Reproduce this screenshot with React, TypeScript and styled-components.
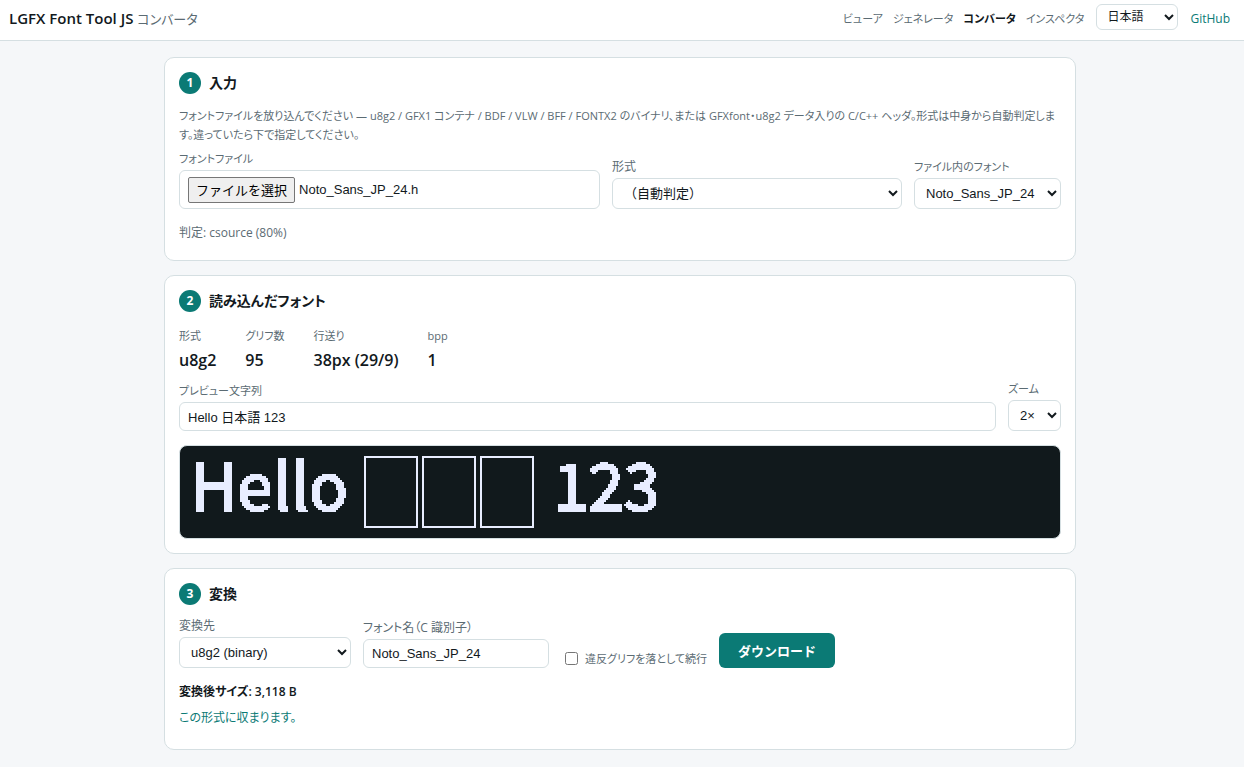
import React, { useRef } from "react";
import styled, { createGlobalStyle } from "styled-components";

const ink = "#12191d";
const muted = "#5b6b73";
const accent = "#0b7a75";
const line = "#d5dfe2";
const uiFont = '"Open Sans", "Noto Sans CJK JP", sans-serif';
const controlFont = '"Liberation Sans", "Noto Sans CJK JP", sans-serif';

const GlobalStyle = createGlobalStyle`
  *, *::before, *::after { box-sizing: border-box; }
  body {
    margin: 0;
    background: #f5f7f9;
    color: ${ink};
    font-family: ${uiFont};
    font-size: 12px;
    line-height: 19px;
    font-feature-settings: "palt";
  }
`;

const Header = styled.header`
  display: flex;
  align-items: center;
  justify-content: space-between;
  gap: 12px;
  min-height: 41px;
  padding: 4px 14px 10px 9px;
  background: #fff;
  border-bottom: 1px solid ${line};
`;

const Title = styled.h1`
  margin: 0;
  padding-top: 2px;
  font-size: 15px;
  line-height: 20px;
  font-weight: 600;
`;

const Subtitle = styled.span`
  color: ${muted};
  font-size: 13px;
  font-weight: 400;
`;

const Nav = styled.nav`
  display: flex;
  align-items: center;
  gap: 10px;
`;

const NavLink = styled.a<{ $current?: boolean; $accent?: boolean }>`
  padding-top: 2px;
  color: ${(p) => (p.$accent ? accent : p.$current ? ink : muted)};
  font-size: ${(p) => (p.$accent ? 12 : 11)}px;
  font-weight: ${(p) => (p.$current ? 700 : 400)};
  text-decoration: none;
`;

const Main = styled.main`
  display: flex;
  flex-direction: column;
  gap: 14px;
  max-width: 944px;
  margin: 0 auto;
  padding: 16px 18px 16px 14px;
`;

const Card = styled.section`
  padding: 14px;
  background: #fff;
  border: 1px solid ${line};
  border-radius: 10px;
`;

const CardTitle = styled.h2<{ $gap: number }>`
  display: flex;
  align-items: center;
  gap: 8px;
  margin: 0 0 ${(p) => p.$gap}px;
  font-size: 14px;
  line-height: 22px;
  font-weight: 600;
`;

const Step = styled.span`
  display: grid;
  place-items: center;
  width: 22px;
  height: 22px;
  border-radius: 50%;
  background: ${accent};
  color: #fff;
  font-size: 12px;
  font-weight: 700;
`;

const Hint = styled.p`
  margin: 0 0 5px;
  color: ${muted};
  font-size: 11px;
`;

const Row = styled.div<{ $columns: string }>`
  display: grid;
  grid-template-columns: ${(p) => p.$columns};
  align-items: end;
  gap: 12px;
`;

const Field = styled.div`
  display: flex;
  flex-direction: column;
  gap: 2px;
  min-width: 0;
`;

const Label = styled.label<{ $dense?: boolean }>`
  color: ${muted};
  font-size: ${(p) => (p.$dense ? 11 : 12)}px;
  white-space: nowrap;
`;

const Select = styled.select<{ $compact?: boolean }>`
  width: 100%;
  height: ${(p) => (p.$compact ? 26 : 31)}px;
  padding: 0 ${(p) => (p.$compact ? 6 : 7)}px;
  background: #fff;
  border: 1px solid ${line};
  border-radius: 6px;
  color: ${ink};
  font-family: ${controlFont};
  font-size: ${(p) => (p.$compact ? 12 : 13)}px;
`;

const LanguageSelect = styled(Select)`
  width: 82px;
  margin: 0 2px;
`;

const TextInput = styled.input`
  width: 100%;
  height: 29px;
  padding: 0 8px;
  background: #fff;
  border: 1px solid ${line};
  border-radius: 6px;
  color: ${ink};
  font-family: ${controlFont};
  font-size: 13px;
`;

const FileBox = styled.div`
  display: flex;
  align-items: center;
  gap: 4px;
  height: 39px;
  padding: 0 8px;
  border: 1px solid ${line};
  border-radius: 6px;
  font-family: ${controlFont};
  font-size: 13px;
`;

const FileButton = styled.button`
  height: 26px;
  padding: 0 7px;
  background: #efefef;
  border: 1px solid #767676;
  border-radius: 2px;
  color: #000;
  font-family: ${controlFont};
  font-size: 13px;
`;

const Status = styled.p<{ $tone?: "strong" | "ok"; $before: number; $after: number }>`
  margin: ${(p) => p.$before}px 0 ${(p) => p.$after}px;
  color: ${(p) => (p.$tone === "ok" ? accent : p.$tone === "strong" ? ink : muted)};
  font-weight: ${(p) => (p.$tone === "strong" ? 600 : 400)};
`;

const Stats = styled.dl`
  display: flex;
  gap: 29px;
  margin: 0 0 8px;
`;

const Stat = styled.div`
  dt {
    color: ${muted};
    font-size: 11px;
  }
  dd {
    margin: 5px 0 0;
    font-size: 16px;
    line-height: 21px;
    font-weight: 600;
  }
`;

const Preview = styled.div`
  display: flex;
  height: 94px;
  margin-top: 14px;
  padding: 8px;
  background: #11191c;
  border: 1px solid ${line};
  border-radius: 8px;
  color: #e8edff;
`;

const BitmapText = styled.span<{ $width: number }>`
  flex: 0 0 ${(p) => p.$width}px;
  height: 76px;
  padding-left: 2px;
  font-family: "Noto Sans CJK JP", sans-serif;
  font-size: 64px;
  font-weight: 400;
  line-height: 56px;
  font-feature-settings: normal;
  white-space: pre;
  -webkit-text-stroke: 2px currentColor;
  filter: url(#bitmap);
`;

const MissingGlyph = styled.span`
  flex: none;
  width: 54px;
  height: 72px;
  margin: 2px;
  border: 2px solid currentColor;
`;

const HiddenDefs = styled.svg`
  display: block;
  width: 0;
  height: 0;
`;

const CheckLabel = styled.label`
  display: flex;
  align-items: center;
  gap: 4px;
  color: ${muted};
  font-size: 11px;
  white-space: nowrap;
`;

const Checkbox = styled.input`
  width: 13px;
  height: 13px;
  margin: 3px 3px 3px 4px;
`;

const DownloadButton = styled.button`
  width: 116px;
  height: 35px;
  background: ${accent};
  border: 0;
  border-radius: 6px;
  color: #fff;
  font-family: ${controlFont};
  font-size: 13px;
  font-weight: 700;
`;

const stats = [
  ["形式", "u8g2"],
  ["グリフ数", "95"],
  ["行送り", "38px (29/9)"],
  ["bpp", "1"],
];

/* Samples one pixel of every 2x2 cell and fills the cell with it: the 2x zoom of a 1-bit font. */
function BitmapFilter() {
  return (
    <HiddenDefs aria-hidden="true">
      <filter
        id="bitmap"
        filterUnits="userSpaceOnUse"
        primitiveUnits="userSpaceOnUse"
        x="0"
        y="0"
        width="400"
        height="76"
        colorInterpolationFilters="sRGB"
      >
        <feFlood x="0" y="0" width="1" height="1" floodColor="#fff" result="dot" />
        <feComposite in="dot" in2="dot" operator="over" x="0" y="0" width="2" height="2" result="cell" />
        <feTile in="cell" x="0" y="0" width="400" height="76" result="grid" />
        <feComponentTransfer in="SourceGraphic" result="hard">
          <feFuncA type="discrete" tableValues="0 1" />
        </feComponentTransfer>
        <feComposite in="hard" in2="grid" operator="in" result="p" />
        <feOffset in="p" dx="1" dy="0" result="px" />
        <feOffset in="p" dx="0" dy="1" result="py" />
        <feOffset in="p" dx="1" dy="1" result="pxy" />
        <feMerge>
          <feMergeNode in="p" />
          <feMergeNode in="px" />
          <feMergeNode in="py" />
          <feMergeNode in="pxy" />
        </feMerge>
      </filter>
    </HiddenDefs>
  );
}

export default function App() {
  const fileInput = useRef<HTMLInputElement>(null);

  return (
    <>
      <GlobalStyle />
      <Header>
        <Title>
          LGFX Font Tool JS <Subtitle>コンバータ</Subtitle>
        </Title>
        <Nav>
          <NavLink href="#viewer">ビューア</NavLink>
          <NavLink href="#generator">ジェネレータ</NavLink>
          <NavLink href="#converter" $current aria-current="page">コンバータ</NavLink>
          <NavLink href="#inspector">インスペクタ</NavLink>
          <LanguageSelect $compact aria-label="言語" defaultValue="ja">
            <option value="ja">日本語</option>
          </LanguageSelect>
          <NavLink href="#github" $accent>GitHub</NavLink>
        </Nav>
      </Header>
      <Main>
        <Card>
          <CardTitle $gap={12}><Step>1</Step>入力</CardTitle>
          <Hint>
            フォントファイルを放り込んでください — u8g2 / GFX1 コンテナ / BDF / VLW / BFF / FONTX2 のバイナリ、または GFXfont・u8g2 データ入りの C/C++ ヘッダ。形式は中身から自動判定します。違っていたら下で指定してください。
          </Hint>
          <Row $columns="minmax(0, 421fr) minmax(0, 290fr) 147px">
            <Field>
              <Label $dense htmlFor="font-file">フォントファイル</Label>
              <FileBox>
                <FileButton type="button" onClick={() => fileInput.current?.click()}>ファイルを選択</FileButton>
                <span>Noto_Sans_JP_24.h</span>
                <input ref={fileInput} id="font-file" type="file" hidden />
              </FileBox>
            </Field>
            <Field>
              <Label htmlFor="format">形式</Label>
              <Select id="format"><option>（自動判定）</option></Select>
            </Field>
            <Field>
              <Label $dense htmlFor="inner-font">ファイル内のフォント</Label>
              <Select id="inner-font"><option>Noto_Sans_JP_24</option></Select>
            </Field>
          </Row>
          <Status $before={14} $after={4}>判定: csource (80%)</Status>
        </Card>

        <Card>
          <CardTitle $gap={14}><Step>2</Step>読み込んだフォント</CardTitle>
          <Stats>
            {stats.map(([name, value]) => (
              <Stat key={name}>
                <dt>{name}</dt>
                <dd>{value}</dd>
              </Stat>
            ))}
          </Stats>
          <Row $columns="minmax(0, 1fr) 53px">
            <Field>
              <Label $dense htmlFor="sample">プレビュー文字列</Label>
              <TextInput id="sample" type="text" defaultValue="Hello 日本語 123" />
            </Field>
            <Field>
              <Label $dense htmlFor="zoom">ズーム</Label>
              <Select id="zoom"><option>2×</option></Select>
            </Field>
          </Row>
          <Preview>
            <BitmapText $width={174}>Hello </BitmapText>
            <MissingGlyph /><MissingGlyph /><MissingGlyph />
            <BitmapText $width={128}> 123</BitmapText>
          </Preview>
        </Card>

        <Card>
          <CardTitle $gap={11}><Step>3</Step>変換</CardTitle>
          <Row $columns="172px 186px auto auto 1fr">
            <Field>
              <Label htmlFor="target">変換先</Label>
              <Select id="target"><option>u8g2 (binary)</option></Select>
            </Field>
            <Field>
              <Label htmlFor="font-name">フォント名（C 識別子）</Label>
              <TextInput id="font-name" type="text" defaultValue="Noto_Sans_JP_24" />
            </Field>
            <CheckLabel>
              <Checkbox type="checkbox" />違反グリフを落として続行
            </CheckLabel>
            <DownloadButton type="button">ダウンロード</DownloadButton>
          </Row>
          <Status $tone="strong" $before={14} $after={4}>変換後サイズ: 3,118 B</Status>
          <Status $tone="ok" $before={7} $after={8}>この形式に収まります。</Status>
        </Card>
      </Main>
      <BitmapFilter />
    </>
  );
}
